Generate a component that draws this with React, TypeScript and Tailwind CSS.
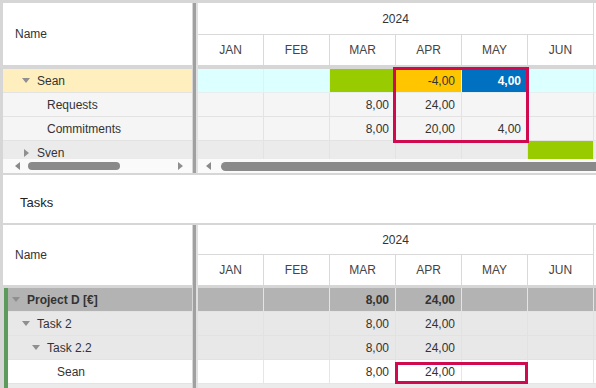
import React from "react";

const months = ["JAN", "FEB", "MAR", "APR", "MAY", "JUN"];

function Down() {
  return (
    <svg width="8" height="5" viewBox="0 0 8 5">
      <path d="M0 0H8L4 5Z" fill="#8f8f8f" />
    </svg>
  );
}
function Right() {
  return (
    <svg width="5" height="8" viewBox="0 0 5 8">
      <path d="M0 0L5 4L0 8Z" fill="#8f8f8f" />
    </svg>
  );
}
function LeftArrow() {
  return (
    <svg width="5" height="8" viewBox="0 0 5 8">
      <path d="M5 0L0 4L5 8Z" fill="#8a8a8a" />
    </svg>
  );
}

type Caret = "down" | "right" | null;

function LeftRow({
  label,
  caret,
  pl,
  bg,
  bold,
}: {
  label: string;
  caret: Caret;
  pl: string;
  bg: string;
  bold?: boolean;
}) {
  return (
    <div className={`flex h-[24px] shrink-0 items-center border-b border-[#e3e3e3] ${bg} ${pl}`}>
      <div className="flex w-[14px] items-center justify-center">
        {caret === "down" ? <Down /> : caret === "right" ? <Right /> : null}
      </div>
      <span className={`ml-[4px] text-[#333] ${bold ? "font-bold" : ""}`}>{label}</span>
    </div>
  );
}

type Cell = { v?: string; bg?: string; cls?: string };

function RightRow({ cells, bg, sep, bold }: { cells: Cell[]; bg: string; sep: string; bold?: boolean }) {
  return (
    <div className={`flex h-[24px] shrink-0 border-b ${sep} ${bg}`}>
      {cells.map((c, i) => (
        <div
          key={i}
          className={`flex w-[66px] shrink-0 items-center justify-end border-r pr-[6px] ${sep} ${c.bg ?? ""} ${
            c.cls ?? "text-[#333]"
          } ${bold ? "font-bold" : ""}`}
        >
          {c.v ?? ""}
        </div>
      ))}
    </div>
  );
}

function MonthRow() {
  return (
    <div className="flex h-[30px] shrink-0">
      {months.map((m) => (
        <div
          key={m}
          className="flex w-[66px] shrink-0 items-center justify-center border-r border-[#d9d9d9] text-[#444]"
        >
          {m}
        </div>
      ))}
    </div>
  );
}

function Splitter() {
  return (
    <div className="flex w-[6px] shrink-0">
      <div className="w-[1px] bg-[#d6d6d6]" />
      <div className="w-[3px] bg-[#a0a0a0]" />
      <div className="w-[2px] bg-[#e0e0e0]" />
    </div>
  );
}

export default function App() {
  return (
    <div className="h-[388px] w-[596px] overflow-hidden border-l-[3px] border-[#d6d6d6] bg-white font-['Liberation_Sans',Arial,sans-serif] text-[12px] leading-none">
      {/* Top grid */}
      <div className="flex h-[175px] border-t-[3px] border-b-[2px] border-[#d6d6d6]">
        {/* left pane */}
        <div className="flex w-[189px] shrink-0 flex-col">
          <div className="flex h-[62px] shrink-0 items-center pl-[12px] text-[#333]">Name</div>
          <div className="h-[4px] shrink-0 bg-[#d6d6d6]" />
          <div className="flex h-[90px] shrink-0 flex-col overflow-hidden">
            <LeftRow label="Sean" caret="down" pl="pl-[16px]" bg="bg-[#ffefbf]" />
            <LeftRow label="Requests" caret={null} pl="pl-[26px]" bg="bg-[#f5f5f5]" />
            <LeftRow label="Commitments" caret={null} pl="pl-[26px]" bg="bg-[#f5f5f5]" />
            <LeftRow label="Sven" caret="right" pl="pl-[16px]" bg="bg-[#ebebeb]" />
          </div>
          <div className="relative flex h-[14px] shrink-0 items-center bg-[#fafafa]">
            <div className="ml-[12px]">
              <LeftArrow />
            </div>
            <div className="ml-[8px] h-[8px] w-[92px] rounded-full bg-[#8a8a8a]" />
            <div className="ml-[58px]">
              <Right />
            </div>
          </div>
        </div>
        <Splitter />
        {/* right pane */}
        <div className="flex w-[398px] shrink-0 flex-col">
          <div className="flex h-[32px] w-[396px] shrink-0 items-center justify-center border-r border-b border-[#d9d9d9] text-[#333]">
            2024
          </div>
          <MonthRow />
          <div className="h-[4px] shrink-0 bg-[#d6d6d6]" />
          <div className="relative flex h-[90px] shrink-0 flex-col">
            <div className="flex h-[90px] flex-col overflow-hidden">
              <RightRow
                bg="bg-[#dcffff]"
                sep="border-[#e6eeee]"
                cells={[
                  {},
                  {},
                  { bg: "bg-[#99cc00]" },
                  { v: "-4,00", bg: "bg-[#ffc600]" },
                  { v: "4,00", bg: "bg-[#0070c0]", cls: "text-white font-bold" },
                  {},
                ]}
              />
              <RightRow
                bg="bg-[#f5f5f5]"
                sep="border-[#e3e3e3]"
                cells={[{}, {}, { v: "8,00" }, { v: "24,00" }, {}, {}]}
              />
              <RightRow
                bg="bg-[#f5f5f5]"
                sep="border-[#e3e3e3]"
                cells={[{}, {}, { v: "8,00" }, { v: "20,00" }, { v: "4,00" }, {}]}
              />
              <RightRow
                bg="bg-[#ebebeb]"
                sep="border-[#e3e3e3]"
                cells={[{}, {}, {}, {}, {}, { bg: "bg-[#99cc00]" }]}
              />
            </div>
            <div className="pointer-events-none absolute left-[195px] top-[-2px] h-[76px] w-[136px] border-[3px] border-[#cf0a4f]" />
          </div>
          <div className="flex h-[14px] shrink-0 items-center bg-[#fafafa]">
            <div className="ml-[8px]">
              <LeftArrow />
            </div>
            <div className="ml-[10px] h-[9px] flex-1 rounded-l-full bg-[#8a8a8a]" />
          </div>
        </div>
      </div>

      {/* Tasks label */}
      <div className="flex h-[48px] items-center pl-[17px] pt-[6px] text-[13px] text-[#222]">Tasks</div>

      {/* Bottom grid */}
      <div className="flex h-[165px] overflow-hidden border-t-[2px] border-[#d6d6d6]">
        <div className="flex w-[189px] shrink-0 flex-col">
          <div className="flex h-[60px] shrink-0 items-center pl-[12px] text-[#333]">Name</div>
          <div className="h-[3px] shrink-0 bg-[#d6d6d6]" />
          <div className="flex flex-1">
            <div className="w-[1px] bg-[#d6d6d6]" />
            <div className="w-[4px] bg-[#5c9b5c]" />
            <div className="flex flex-1 flex-col">
              <LeftRow label="Project D [€]" caret="down" pl="pl-[1px]" bg="bg-[#b3b3b3]" bold />
              <LeftRow label="Task 2" caret="down" pl="pl-[11px]" bg="bg-[#e8e8e8]" />
              <LeftRow label="Task 2.2" caret="down" pl="pl-[21px]" bg="bg-[#e8e8e8]" />
              <LeftRow label="Sean" caret={null} pl="pl-[31px]" bg="bg-white" />
              <div className="h-[24px] bg-[#ebebeb]" />
            </div>
          </div>
        </div>
        <Splitter />
        <div className="flex w-[398px] shrink-0 flex-col">
          <div className="flex h-[30px] w-[396px] shrink-0 items-center justify-center border-r border-b border-[#d9d9d9] text-[#333]">
            2024
          </div>
          <MonthRow />
          <div className="h-[3px] shrink-0 bg-[#d6d6d6]" />
          <div className="relative flex flex-1 flex-col">
            <RightRow
              bg="bg-[#b3b3b3]"
              sep="border-[#e4e4e4]"
              bold
              cells={[{}, {}, { v: "8,00" }, { v: "24,00" }, {}, {}]}
            />
            <RightRow
              bg="bg-[#e8e8e8]"
              sep="border-[#e2e2e2]"
              cells={[{}, {}, { v: "8,00" }, { v: "24,00" }, {}, {}]}
            />
            <RightRow
              bg="bg-[#e8e8e8]"
              sep="border-[#e2e2e2]"
              cells={[{}, {}, { v: "8,00" }, { v: "24,00" }, {}, {}]}
            />
            <RightRow
              bg="bg-white"
              sep="border-[#e6e6e6]"
              cells={[{}, {}, { v: "8,00" }, { v: "24,00" }, {}, {}]}
            />
            <div className="h-[24px] bg-[#ebebeb]" />
            <div className="pointer-events-none absolute left-[197px] top-[74px] h-[22px] w-[133px] border-[3px] border-[#cf0a4f]" />
          </div>
        </div>
      </div>
    </div>
  );
}
